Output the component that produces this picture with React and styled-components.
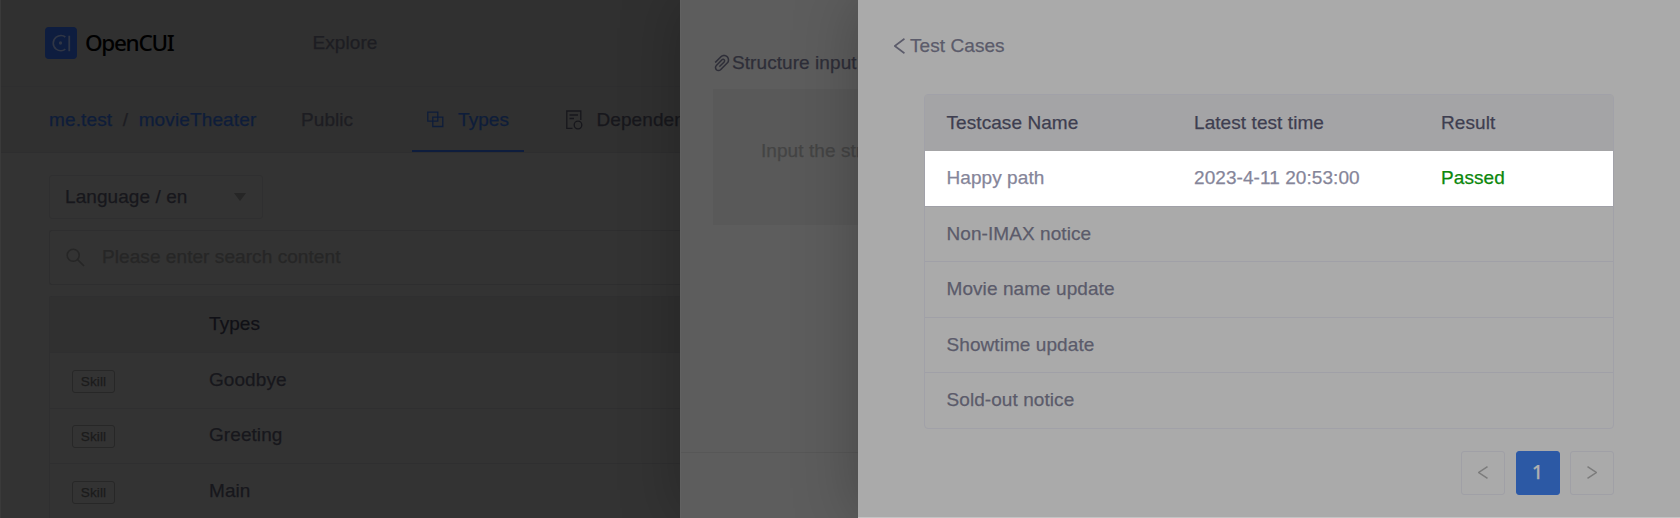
import React from "react";
import styled, { createGlobalStyle } from "styled-components";
import { AiOutlinePaperClip } from "react-icons/ai";

const GlobalStyle = createGlobalStyle`
  *, *::before, *::after { box-sizing: border-box; }
  body {
    margin: 0;
    overflow: hidden;
    background: #333;
    font: 19px/24px "Liberation Sans", Arial, sans-serif;
    letter-spacing: 0.07px;
    -webkit-text-stroke: 0.25px currentColor;
  }
  svg { display: block; flex: none; }
`;

const Screen = styled.div`
  display: grid;
  grid-template-columns: 680px 178px 822px;
  width: 1680px;
  height: 518px;
  overflow: hidden;
  white-space: nowrap;
`;

/* ---------- types page ---------- */

const Page = styled.main`
  overflow: hidden;
  background: #333333;
  border-left: 1px solid #3a3a3a;
`;

const Header = styled.header`
  display: flex;
  align-items: center;
  height: 87px;
  padding-left: 44px;
  background: #303030;
  border-bottom: 1px solid #2e2e2f;
`;

const Brand = styled.div`
  width: 267.5px;
  display: flex;
  align-items: center;
  gap: 8px;
  color: #000;
  font: 500 22.5px/32px "Noto Sans", sans-serif;
  letter-spacing: -1.3px;
  -webkit-text-stroke: 0;
`;

const HeaderLink = styled.a`
  color: #1d1d22;
`;

const NavBar = styled.nav`
  display: flex;
  align-items: stretch;
  height: 66px;
  padding-left: 48px;
  background: #303030;
  border-bottom: 1px solid #2e2e2f;
`;

const Crumbs = styled.div`
  flex: none;
  display: flex;
  align-items: center;
  gap: 10.5px;
  width: 242px;
  color: #0e1d3a;
  letter-spacing: 0.13px;
`;

const Slash = styled.span`
  color: #1d1d22;
`;

const Visibility = styled.div`
  flex: none;
  align-self: center;
  width: 73px;
  padding: 4px 0 4px 10px;
  border-radius: 3px;
  color: #1d1d22;
`;

const Tab = styled.a`
  flex: none;
  display: flex;
  align-items: center;
  gap: 14px;
  height: 65px;
  margin-left: ${(p) => p.$offset}px;
  padding: 2px 15px 0;
  color: ${(p) => (p.$active ? "#0e1d3a" : "#17171c")};
  border-bottom: 2px solid ${(p) => (p.$active ? "#0e1d3d" : "transparent")};
`;

const Content = styled.section`
  display: flex;
  flex-direction: column;
  padding: 22px 0 0 48px;
`;

const Select = styled.div`
  display: flex;
  align-items: center;
  justify-content: space-between;
  width: 214px;
  height: 44px;
  padding: 0 16px 1px 15px;
  border: 1px solid #2f2f30;
  border-radius: 3px;
  color: #17171c;
`;

const Search = styled.div`
  display: flex;
  align-items: center;
  gap: 17px;
  height: 55px;
  margin-top: 11px;
  padding: 0 0 1px 16px;
  border: 1px solid #2e2e2f;
  border-right: 0;
  border-radius: 3px 0 0 3px;
  color: #262626;
`;

const TypeTable = styled.div`
  margin-top: 11px;
  border: 1px solid #2f2f30;
  border-right: 0;
  border-radius: 3px 0 0 0;
`;

const TypeRow = styled.div`
  display: grid;
  grid-template-columns: 159px 1fr;
  align-items: center;
  height: ${(p) => (p.$head ? 56 : 55.5)}px;
  padding-bottom: 1px;
  background: ${(p) => (p.$head ? "#303030" : "transparent")};
  color: ${(p) => (p.$head ? "#101016" : "#17171c")};
  border-bottom: 1px solid #2f2f30;
`;

const Tag = styled.span`
  justify-self: start;
  width: 43px;
  height: 23px;
  margin: 3px 0 0 22px;
  border: 1px solid #272727;
  border-radius: 3px;
  color: #1b1b1b;
  font-size: 13.6px;
  line-height: 21px;
  text-align: center;
`;

/* ---------- drawers ---------- */

const InputDrawer = styled.aside`
  position: relative;
  z-index: 1;
  display: flex;
  flex-direction: column;
  padding: 50px 0 0 32px;
  background: #5d5d5d;
  border-left: 1px solid #616161;
  box-shadow: 0 0 60px rgba(0, 0, 0, 0.25);
`;

const DrawerLabel = styled.div`
  display: flex;
  align-items: center;
  height: 26px;
  padding-left: 1px;
  color: #2e2e38;

  svg { margin: -1px -1px 0 -3px; }
`;

const InputArea = styled.div`
  height: 136px;
  margin-top: 13px;
  padding: 50px 0 0 48px;
  background: #595959;
  color: #444444;
`;

const DrawerFooter = styled.div`
  height: 66px;
  margin: auto 0 0 -32px;
  border-top: 1px solid #575757;
`;

const CaseDrawer = styled.aside`
  position: relative;
  z-index: 2;
  display: flex;
  flex-direction: column;
  padding: 33px 66px 0 36px;
  background: #aaaaaa;
  border-bottom: 1px solid #c4c4c4;
  box-shadow: 0 0 60px rgba(0, 0, 0, 0.25);
`;

const DrawerTitle = styled.div`
  display: flex;
  align-items: center;
  gap: 5px;
  height: 26px;
  color: #5b5b6a;
`;

const CaseTable = styled.div`
  margin: 35px 0 0 30px;
  border: 1px solid #a1a1a8;
  border-radius: 4px;
`;

const CaseRow = styled.div`
  display: grid;
  grid-template-columns: 247.5px 247px 1fr;
  align-items: center;
  height: ${(p) => (p.$head ? 56 : 55.5)}px;
  padding-left: 21.5px;
  background: ${(p) => (p.$head ? "#a4a4a6" : p.$selected ? "#fff" : "transparent")};
  color: ${(p) => (p.$head ? "#3e3e50" : p.$selected ? "#858599" : "#5b5b6a")};
  border-bottom: ${(p) => (p.$head ? "0" : "1px solid #a0a0a7")};
  &:last-child { height: 54.5px; border-bottom: 0; }
`;

const Passed = styled.span`
  color: #0b870b;
`;

const Pager = styled.div`
  display: flex;
  justify-content: flex-end;
  gap: 10.5px;
  margin-top: 22px;
`;

const PageButton = styled.button`
  display: flex;
  align-items: center;
  justify-content: center;
  width: 44px;
  height: 44px;
  padding: ${(p) => (p.$active ? "0 0 2px" : "0")};
  border: 1px solid ${(p) => (p.$active ? "#2c59a8" : "#a0a0a6")};
  border-radius: 3px;
  background: ${(p) => (p.$active ? "#2c59a5" : "transparent")};
  color: ${(p) => (p.$active ? "#b0b0b0" : "#7c7c7c")};
  font: 500 19px/24px "Noto Sans", sans-serif;
`;

const Logo = () => (
  <svg width="32" height="32" viewBox="0 0 33 33" fill="none">
    <rect width="33" height="33" rx="4" fill="#0e1d3f" />
    <path d="M21 10.300C18.500 8.300 14.500 8.300 11.500 10.500C7.500 13.800 7.500 19.500 11.500 22.800C14.500 25 18.500 24.800 21 22.800" stroke="#303645" strokeWidth="1.7" />
    <path d="M25 9V25" stroke="#303645" strokeWidth="1.9" />
    <circle cx="16" cy="16.500" r="1.7" fill="#303645" />
  </svg>
);

const TypesIcon = () => (
  <svg width="17" height="17" viewBox="0 0 17 17" fill="none" stroke="currentColor" strokeWidth="1.3">
    <path d="M.8 1.200h10v9H.8zM5.800 6.200h10v9.300h-10z" />
  </svg>
);

const DependencyIcon = () => (
  <svg width="17" height="20" viewBox="0 0 17 20" fill="none" stroke="currentColor" strokeWidth="1.3">
    <path d="M6.500 18.300H.8V1h14v9M3.500 5h8.500M3.500 8.500h4.500" />
    <circle cx="12" cy="15" r="3.800" />
  </svg>
);

const SearchIcon = () => (
  <svg width="19" height="19" viewBox="0 0 19 19" fill="none" stroke="#262626" strokeWidth="1.6">
    <circle cx="7.200" cy="7.200" r="6" />
    <path d="M11.500 11.500 18 18" />
  </svg>
);

const Caret = () => (
  <svg width="12" height="8" viewBox="0 0 12 8">
    <path d="M0 0h12L6 8z" fill="#262626" />
  </svg>
);

const Chevron = ({ width, height, right }) => (
  <svg width={width} height={height} viewBox="0 0 10 14" preserveAspectRatio="none" fill="none" stroke="currentColor" strokeWidth="1.5">
    <path d={right ? "M.5.7 9.300 7 .5 13.300" : "M9.500.7.7 7l8.800 6.300"} />
  </svg>
);

const types = ["Goodbye", "Greeting", "Main"];

const cases = [
  { name: "Happy path", time: "2023-4-11 20:53:00", passed: true },
  { name: "Non-IMAX notice" },
  { name: "Movie name update" },
  { name: "Showtime update" },
  { name: "Sold-out notice" },
];

export default function App() {
  return (
    <>
      <GlobalStyle />
      <Screen>
        <Page>
          <Header>
            <Brand><Logo />OpenCUI</Brand>
            <HeaderLink>Explore</HeaderLink>
          </Header>
          <NavBar>
            <Crumbs>
              <span>me.test</span><Slash>/</Slash><span>movieTheater</span>
            </Crumbs>
            <Visibility>Public</Visibility>
            <Tab $active $offset={48}><TypesIcon />Types</Tab>
            <Tab $offset={26.5}><DependencyIcon />Dependencies</Tab>
          </NavBar>
          <Content>
            <Select>Language / en<Caret /></Select>
            <Search><SearchIcon />Please enter search content</Search>
            <TypeTable>
              <TypeRow $head><span /><span>Types</span></TypeRow>
              {types.map((name) => (
                <TypeRow key={name}><Tag>Skill</Tag><span>{name}</span></TypeRow>
              ))}
            </TypeTable>
          </Content>
        </Page>

        <InputDrawer>
          <DrawerLabel><AiOutlinePaperClip size={22} />Structure input</DrawerLabel>
          <InputArea>Input the structure</InputArea>
          <DrawerFooter />
        </InputDrawer>

        <CaseDrawer>
          <DrawerTitle><Chevron width={11} height={16} />Test Cases</DrawerTitle>
          <CaseTable>
            <CaseRow $head>
              <span>Testcase Name</span><span>Latest test time</span><span>Result</span>
            </CaseRow>
            {cases.map((c) => (
              <CaseRow key={c.name} $selected={c.passed}>
                <span>{c.name}</span>
                <span>{c.time}</span>
                {c.passed && <Passed>Passed</Passed>}
              </CaseRow>
            ))}
          </CaseTable>
          <Pager>
            <PageButton><Chevron width={10} height={13} /></PageButton>
            <PageButton $active>1</PageButton>
            <PageButton><Chevron right width={10} height={13} /></PageButton>
          </Pager>
        </CaseDrawer>
      </Screen>
    </>
  );
}
